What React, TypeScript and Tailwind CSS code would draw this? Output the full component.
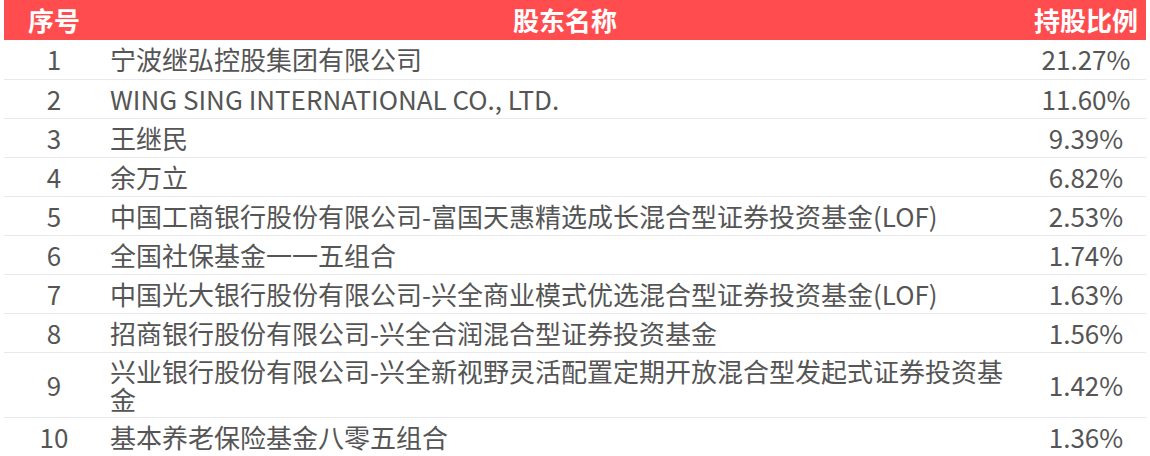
import React from 'react'

const rows = [
  { no: 1, name: '宁波继弘控股集团有限公司', pct: '21.27%' },
  { no: 2, name: 'WING SING INTERNATIONAL CO., LTD.', pct: '11.60%' },
  { no: 3, name: '王继民', pct: '9.39%' },
  { no: 4, name: '余万立', pct: '6.82%' },
  { no: 5, name: '中国工商银行股份有限公司-富国天惠精选成长混合型证券投资基金(LOF)', pct: '2.53%' },
  { no: 6, name: '全国社保基金一一五组合', pct: '1.74%' },
  { no: 7, name: '中国光大银行股份有限公司-兴全商业模式优选混合型证券投资基金(LOF)', pct: '1.63%' },
  { no: 8, name: '招商银行股份有限公司-兴全合润混合型证券投资基金', pct: '1.56%' },
  { no: 9, name: '兴业银行股份有限公司-兴全新视野灵活配置定期开放混合型发起式证券投资基金', pct: '1.42%' },
  { no: 10, name: '基本养老保险基金八零五组合', pct: '1.36%' },
]

const App = () => {
  return (
    <div className="w-[1150px] h-[456px] overflow-hidden bg-white px-1 font-['Noto_Sans_CJK_SC',sans-serif] text-[26px] leading-[28px] text-[#555]">
      <table className="w-full border-collapse table-fixed">
        <thead>
          <tr className="h-10 bg-[#ff4d4f] text-white">
            <th className="w-[100px] text-center font-bold">序号</th>
            <th className="w-[922px] text-center font-bold">股东名称</th>
            <th className="text-center font-bold">持股比例</th>
          </tr>
        </thead>
        <tbody>
          {rows.map((r) => (
            <tr key={r.no} className="border-b border-[#e8e8ee]">
              <td className="h-[39px] py-1 text-center">{r.no}</td>
              <td className="h-[39px] py-1 pl-1.5 pr-2">{r.name}</td>
              <td className="h-[39px] py-1 text-center">{r.pct}</td>
            </tr>
          ))}
        </tbody>
      </table>
    </div>
  )
}

export default App
